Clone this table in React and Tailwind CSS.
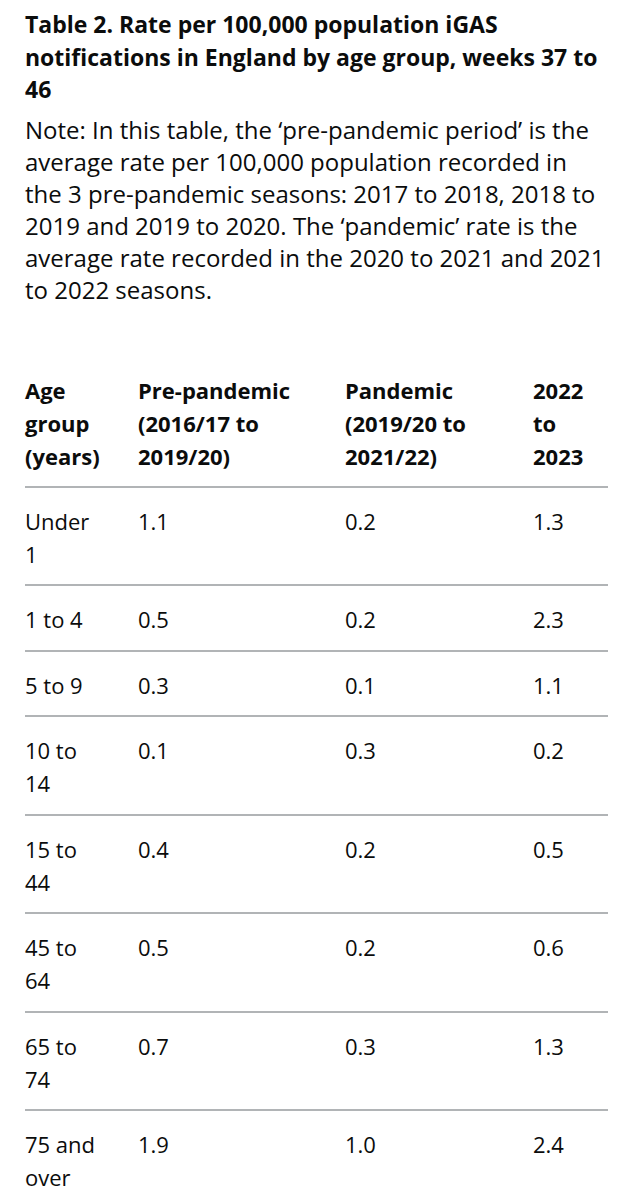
import React from 'react';

const rows = [
  ['Under 1', '1.1', '0.2', '1.3'],
  ['1 to 4', '0.5', '0.2', '2.3'],
  ['5 to 9', '0.3', '0.1', '1.1'],
  ['10 to 14', '0.1', '0.3', '0.2'],
  ['15 to 44', '0.4', '0.2', '0.5'],
  ['45 to 64', '0.5', '0.2', '0.6'],
  ['65 to 74', '0.7', '0.3', '1.3'],
  ['75 and over', '1.9', '1.0', '2.4'],
];

const headers = [
  { label: 'Age group (years)', className: 'w-[113px] pr-[37px]' },
  { label: 'Pre-pandemic (2016/17 to 2019/20)', className: 'w-[207px] pr-[20px]' },
  { label: 'Pandemic (2019/20 to 2021/22)', className: 'w-[188px] pr-[20px]' },
  { label: '2022 to 2023', className: 'w-[75px] pr-[10px]' },
];

const App = () => {
  return (
    <div className="min-h-screen bg-white text-[#0b0c0c] px-[25px] pt-[8px] font-['Open_Sans',_'Liberation_Sans',_sans-serif]">
      <h2 className="text-[23px] leading-[32.5px] font-bold">
        Table 2. Rate per 100,000 population iGAS notifications in England by age group, weeks 37 to 46
      </h2>
      <p className="mt-[8px] text-[24px] leading-[32px]">
        Note: In this table, the ‘pre-pandemic period’ is the average rate per 100,000 population recorded in the 3 pre-pandemic seasons: 2017 to 2018, 2018 to 2019 and 2019 to 2020. The ‘pandemic’ rate is the average rate recorded in the 2020 to 2021 and 2021 to 2022 seasons.
      </p>

      {/* Table */}
      <table className="mt-[68px] w-[583px] table-fixed border-collapse text-[22px] leading-[33px]">
        <thead>
          <tr>
            {headers.map(h => (
              <th
                key={h.label}
                className={`${h.className} pb-[13px] text-left align-top font-bold border-b-2 border-[#b1b4b6]`}
              >
                {h.label}
              </th>
            ))}
          </tr>
        </thead>
        <tbody>
          {rows.map(row => (
            <tr key={row[0]}>
              {row.map((cell, i) => (
                <td
                  key={i}
                  className={`${i === 0 ? 'pr-[37px]' : i === 3 ? 'pr-[10px]' : 'pr-[20px]'} pt-[17px] pb-[13.5px] align-top border-b-2 border-[#b1b4b6]`}
                >
                  {cell}
                </td>
              ))}
            </tr>
          ))}
        </tbody>
      </table>
    </div>
  );
};

export default App;
